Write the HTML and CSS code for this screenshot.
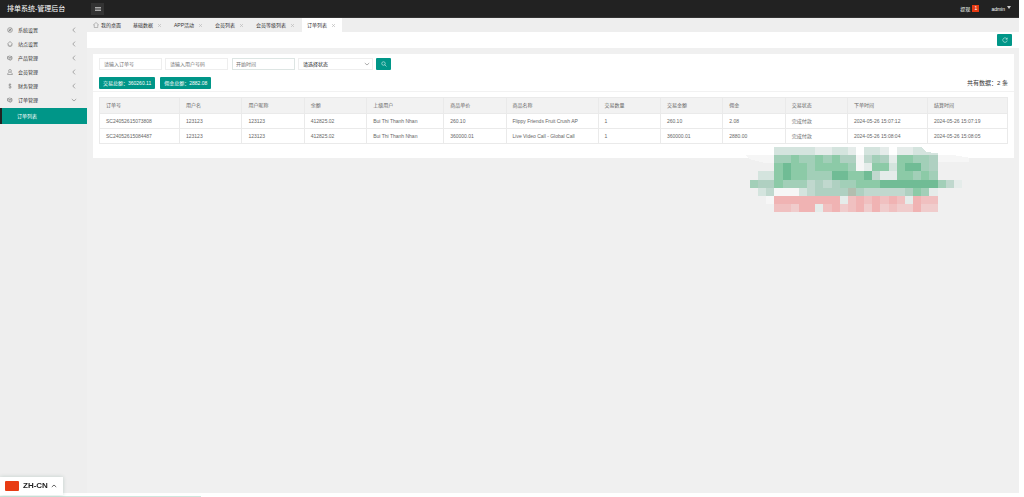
FILE: index.html
```html
<!DOCTYPE html>
<html lang="zh-CN">
<head>
<meta charset="utf-8">
<title>排单系统-管理后台</title>
<link rel="stylesheet" href="styles.css">
</head>
<body>
<svg class="defs" aria-hidden="true">
  <symbol id="left" viewBox="0 0 6 6"><path d="M4 .6 1.8 3 4 5.4"/></symbol>
  <symbol id="down" viewBox="0 0 6 6"><path d="M.8 2 3 4 5.200 2"/></symbol>
  <symbol id="up" viewBox="0 0 6 6"><path d="M.8 4 3 2l2.200 2"/></symbol>
  <symbol id="close" viewBox="0 0 6 6"><path d="m1.200 1.200 3.600 3.600m0-3.600L1.200 4.800"/></symbol>
  <symbol id="cube" viewBox="0 0 12 12"><path d="M1 3.500 5 2l5 1.500v5L7 10.500 1 8zM1 3.500l5 2 4-2M6 5.500v4.500M3 7l2 1M7.500 8l2-1.500"/></symbol>
</svg>
<header class="top">
  <h1 class="brand">排单系统-管理后台</h1>
  <button class="toggle" aria-label="菜单"><svg viewBox="0 0 6 6"><path d="M0 1.500h6M0 3h6M0 4.500h6"/></svg></button>
  <nav class="user">
    <a href="#">提现<span class="badge">1</span></a>
    <a href="#">admin<span class="caret"></span></a>
  </nav>
</header>
<div class="body">
  <nav class="side">
    <a href="#"><svg class="ico" viewBox="0 0 12 12"><circle cx="6" cy="6" r="4.800"/><circle cx="6" cy="6" r="2"/><path d="m3 9 6-6"/></svg>系统设置<svg class="chev"><use href="#left"/></svg></a>
    <a href="#"><svg class="ico" viewBox="0 0 12 12"><path d="M6 1 1.200 5.500 2.500 6v4h7V6l1.300-.5zM4.500 10.500h3"/></svg>站点设置<svg class="chev"><use href="#left"/></svg></a>
    <a href="#"><svg class="ico"><use href="#cube"/></svg>产品管理<svg class="chev"><use href="#left"/></svg></a>
    <a href="#"><svg class="ico" viewBox="0 0 12 12"><circle cx="6" cy="3.800" r="2.800"/><path d="M4.500 6.500C2 7.500 1.500 9 1.200 11h9.600C10.500 9 10 7.500 7.500 6.500"/></svg>会员管理<svg class="chev"><use href="#left"/></svg></a>
    <a href="#"><svg class="ico" viewBox="0 0 12 12"><path d="M8.500 4C8 1.800 3.500 1.800 3.500 4S8.500 6 8.500 8.200 3.500 10.200 3.300 8M6 1v10"/></svg>财务管理<svg class="chev"><use href="#left"/></svg></a>
    <a href="#"><svg class="ico"><use href="#cube"/></svg>订单管理<svg class="chev"><use href="#down"/></svg></a>
    <a href="#" class="current">订单列表</a>
  </nav>
  <main class="main">
    <nav class="tabs">
      <a href="#" class="home"><svg viewBox="0 0 12 12"><path d="M6 1 1 5.500h1.500V11h7V5.500H11z"/></svg>我的桌面</a>
      <a href="#">基础数据<svg><use href="#close"/></svg></a>
      <a href="#">APP活动<svg><use href="#close"/></svg></a>
      <a href="#">会员列表<svg><use href="#close"/></svg></a>
      <a href="#">会员等级列表<svg><use href="#close"/></svg></a>
      <a href="#" class="active">订单列表<svg><use href="#close"/></svg></a>
    </nav>
    <div class="crumb">
      <button class="btn" aria-label="刷新"><svg viewBox="0 0 12 12"><path d="M10 4A4.500 4.500 0 1 0 10.500 7M10.500 1.500V4.500H7.500"/></svg></button>
    </div>
    <section class="card">
      <form class="filters">
        <input type="text" placeholder="请输入订单号" aria-label="订单号">
        <input type="text" placeholder="请输入用户号码" aria-label="用户号码">
        <input type="text" class="date" placeholder="开始时间" aria-label="开始时间">
        <span class="pick"><select aria-label="状态"><option>请选择状态</option></select><svg><use href="#down"/></svg></span>
        <button class="btn" type="button" aria-label="搜索"><svg viewBox="0 0 12 12"><circle cx="5" cy="5" r="3.500"/><path d="m7.600 7.600 3.400 3.400"/></svg></button>
      </form>
      <div class="stats">
        <button class="stat">交易总额：360260.11</button>
        <button class="stat">佣金总额：2882.08</button>
        <span class="count">共有数据：2 条</span>
      </div>
      <div class="sheet">
        <table>
          <colgroup><col class="c-id"><col><col><col><col class="c-m"><col><col class="c-l"><col><col><col><col><col class="c-id"><col class="c-id"></colgroup>
          <thead><tr><th>订单号</th><th>用户名</th><th>用户昵称</th><th>余额</th><th>上级用户</th><th>商品单价</th><th>商品名称</th><th>交易数量</th><th>交易金额</th><th>佣金</th><th>交易状态</th><th>下单时间</th><th>结算时间</th></tr></thead>
          <tbody>
            <tr><td>SC24052615073808</td><td>123123</td><td>123123</td><td>412825.02</td><td>Bui Thi Thanh Nhan</td><td>260.10</td><td>Flippy Friends Fruit Crush AP</td><td>1</td><td>260.10</td><td>2.08</td><td>完成付款</td><td>2024-05-26 15:07:12</td><td>2024-05-26 15:07:19</td></tr>
            <tr><td>SC24052615084487</td><td>123123</td><td>123123</td><td>412825.02</td><td>Bui Thi Thanh Nhan</td><td>360000.01</td><td>Live Video Call - Global Call</td><td>1</td><td>360000.01</td><td>2880.00</td><td>完成付款</td><td>2024-05-26 15:08:04</td><td>2024-05-26 15:08:05</td></tr>
          </tbody>
        </table>
      </div>
    </section>
  </main>
</div>
<svg class="mosaic" viewBox="0 0 26 8" preserveAspectRatio="none" aria-hidden="true"></svg>
<div class="progress"></div>
<button class="lang"><span class="flag"></span>ZH-CN<svg><use href="#up"/></svg></button>
<script src="mosaic.js"></script>
</body>
</html>
```

FILE: styles.css
```css
* { box-sizing: border-box; }
body {
  margin: 0;
  padding: 0 5px 4px 0;
  min-height: 100vh;
  display: flex;
  flex-direction: column;
  background: #fff;
  color: #333;
  font: 5px/8px "Liberation Sans", "Noto Sans CJK SC", sans-serif;
}
a { color: inherit; text-decoration: none; }
button, input, select { font: inherit; margin: 0; padding: 0; border: 0; border-radius: 0; }
svg { width: 6px; height: 6px; fill: none; stroke: currentColor; flex: none; }
.defs { position: absolute; width: 0; height: 0; }

.top {
  display: flex;
  align-items: center;
  height: 18px;
  padding-right: 8px;
  background: #222;
  color: #fff;
  border-bottom: 1px solid #333;
}
.brand { width: 91px; margin: 0; padding-left: 7px; font-size: 7px; line-height: 12px; font-weight: 400; white-space: nowrap; }
.toggle { display: flex; align-items: center; justify-content: center; width: 13px; height: 12px; background: #333; color: #aaa; }
.user { margin-left: auto; display: flex; gap: 12px; }
.user a { display: flex; align-items: center; }
.badge { margin-left: 2px; width: 7px; height: 7px; line-height: 7px; text-align: center; background: #e53a12; }
.caret { margin: 0 0 2px 2px; border: 2px solid transparent; border-top: 3px solid #ccc; border-bottom: 0; }

.body { flex: 1; display: flex; }
.side { width: 87px; flex: none; padding-top: 5px; background: #eee; }
.side a { display: flex; align-items: center; height: 14px; padding: 0 10px 0 7px; }
.ico { margin-right: 5px; stroke: #666; }
.chev { margin-left: auto; stroke: #777; stroke-width: .6; }
.side .current { height: 16px; margin-top: 1px; padding-left: 15px; border-left: 2px solid #222; background: #009688; color: #fff; }

.main { flex: 1; min-width: 0; background: #f0f0f0; }
.tabs { display: flex; gap: 1px; height: 14px; background: #eee; }
.tabs a { display: flex; align-items: center; padding: 0 6px 0 5px; white-space: nowrap; }
.tabs svg { width: 5px; height: 5px; margin-left: 4px; stroke: #bbb; stroke-width: .8; }
.tabs .home { padding: 0 6px; }
.tabs .home svg { width: 6px; height: 6px; margin: 0 2px 0 0; stroke: #666; }
.tabs .active { background: #fff; }
.crumb { display: flex; align-items: center; justify-content: flex-end; height: 16px; padding-right: 7px; background: #fff; }
.btn { display: flex; align-items: center; justify-content: center; width: 15px; height: 12px; background: #009688; color: #fff; border-radius: 1px; }

.card { margin: 6px 5px 0 6px; padding-bottom: 14px; background: #fff; }
.filters { display: flex; gap: 3px; padding: 4px 6px 0; }
.filters input { width: 63px; height: 12px; padding: 0 4px; border: 1px solid #eee; background: #fff; }
.filters .date { margin-left: 1px; padding: 0 3px; border-color: #dde5e3; }
.filters input::placeholder { color: #757575; opacity: 1; }
.pick { position: relative; width: 75px; height: 12px; }
.pick select { width: 100%; height: 100%; padding: 0 4px; appearance: none; border: 1px solid #eee; background: #fff; color: #222; }
.pick svg { position: absolute; right: 3px; top: 3px; stroke: #999; stroke-width: .8; pointer-events: none; }
.stats { display: flex; align-items: center; gap: 5px; padding: 7px 6px 2px; border-bottom: 1px solid #f2f2f2; }
.stat { height: 12px; padding: 0 4px; background: #009688; color: #fff; border-radius: 1px; }
.count { margin-left: auto; font-size: 6px; }

.sheet { padding: 5px 6px 0; }
table { width: 100%; table-layout: fixed; border-collapse: collapse; color: #666; }
th, td { height: 16px; padding: 0 6px 1px; border: 1px solid #eaeaea; font-weight: 400; text-align: left; white-space: nowrap; }
td { height: 15px; }
th { background: #f2f2f2; }
.c-id { width: 80px; }
.c-m { width: 77px; }
.c-l { width: 92px; }

.mosaic { position: absolute; top: 147px; right: 62px; width: 212px; height: 65px; overflow: visible; stroke: none; shape-rendering: crispEdges; }
.lang {
  position: fixed;
  left: 0;
  bottom: 2px;
  display: flex;
  align-items: center;
  height: 18px;
  padding: 0 6px 0 5px;
  background: #fff;
  color: #222;
  font-size: 8px;
  font-weight: 700;
  box-shadow: 0 0 4px rgba(0, 80, 60, .2);
}
.flag { width: 14px; height: 10px; margin-right: 4px; border-radius: 1px; background: #e83c14; }
.lang svg { margin-left: 3px; stroke-width: .7; }
.progress { position: fixed; left: 0; bottom: 0; width: 201px; height: 1px; background: #cfe6de; }
```

FILE: mosaic.js
```javascript
const colors = {
  a: '#d4e4de', b: '#a2cfb8', c: '#8ccaa7', d: '#70bc95', e: '#c0d8ce', f: '#e5ecea',
  g: '#afd0c1', w: '#f6f6f6', p: '#f0b3b3', q: '#f0cccc', r: '#f0c0c0', t: '#b2beaf'
};
const rows = [
  '...aaaaaffaaf.aaf.ffa.....',
  '...bbcbbcbcggwebgfccbbg...',
  '...cdccbccccbwfccacddbg...',
  '.aacdccbbbddccdeffccbcb...',
  'bggcbbbegegbbcccdddddddbef',
  '.aewwwaeggggtgeeeeegcbf...',
  '..wppppppppfrprprprfprr...',
  '...rrqppfrpqrpqpqrqqpqq...'
];
const ns = 'http://www.w3.org/2000/svg';
const board = document.querySelector('.mosaic');
function add(d, fill) {
  const path = document.createElementNS(ns, 'path');
  path.setAttribute('d', d);
  path.setAttribute('fill', fill);
  board.append(path);
}
add('M-.5 1 H25 L26.800 1.300 V1.800 H20 V2 H2 L0 1.500z', '#f6f6f6');
add('M21 0 L21.600 .6 L23 .8 V1 H21z', colors.a);
rows.forEach((row, y) => [...row].forEach((key, x) => {
  if (colors[key]) add(`M${x} ${y}h1v1h-1z`, colors[key]);
}));
```
